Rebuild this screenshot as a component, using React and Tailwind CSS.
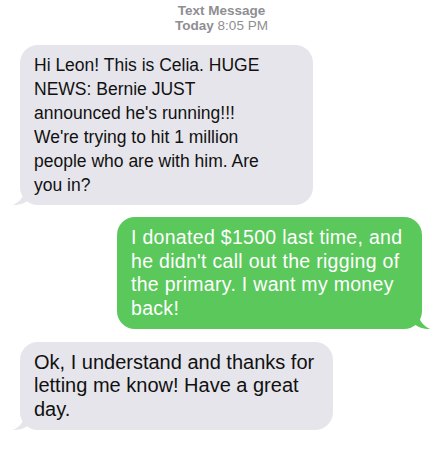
import React from 'react'

const font = { fontFamily: '"Liberation Sans", Arial, sans-serif' }

const Bubble = ({ lines, mine, className }) => (
  <div
    className={`relative rounded-[18px] px-[14px] ${
      mine ? 'bg-[#5ac85b] text-white' : 'bg-[#e6e5eb] text-[#111]'
    } ${className}`}
  >
    {lines.map((l, i) => (
      <div key={i} className="whitespace-nowrap">
        {l}
      </div>
    ))}
    {mine ? (
      <svg className="absolute -right-[8px] bottom-0" width="16" height="18" viewBox="0 0 16 18">
        <path d="M0 0 L4 0 C4 8 8 14 16 18 C9 18 4 16 0 13 Z" fill="#5ac85b" />
      </svg>
    ) : (
      <svg className="absolute -left-[7px] bottom-0" width="16" height="18" viewBox="0 0 16 18">
        <path d="M16 0 L12 0 C12 8 8 14 0 18 C7 18 12 16 16 13 Z" fill="#e6e5eb" />
      </svg>
    )}
  </div>
)

const App = () => {
  return (
    <div className="w-[443px] h-[450px] bg-white overflow-hidden" style={font}>
      <div className="flex flex-col items-center pt-[3px] text-[13.5px] leading-[15px] text-[#8e8e93]">
        <div className="font-bold">Text Message</div>
        <div>
          <span className="font-bold">Today</span> 8:05 PM
        </div>
      </div>
      <div className="flex flex-col mt-[12px]">
        <Bubble
          className="ml-[20px] w-[293px] py-2 text-[17.5px] leading-[24px]"
          lines={[
            'Hi Leon! This is Celia. HUGE',
            'NEWS: Bernie JUST',
            "announced he's running!!!",
            "We're trying to hit 1 million",
            'people who are with him. Are',
            'you in?',
          ]}
        />
        <Bubble
          mine
          className="ml-[117px] mt-[12px] w-[305px] py-[9px] text-[19.5px] leading-[23.5px] tracking-[0.3px]"
          lines={[
            'I donated $1500 last time, and',
            "he didn't call out the rigging of",
            'the primary. I want my money',
            'back!',
          ]}
        />
        <Bubble
          className="ml-[20px] mt-[13px] w-[313px] py-[8.75px] text-[20px] leading-[23.5px]"
          lines={[
            'Ok, I understand and thanks for',
            'letting me know! Have a great',
            'day.',
          ]}
        />
      </div>
    </div>
  )
}

export default App
